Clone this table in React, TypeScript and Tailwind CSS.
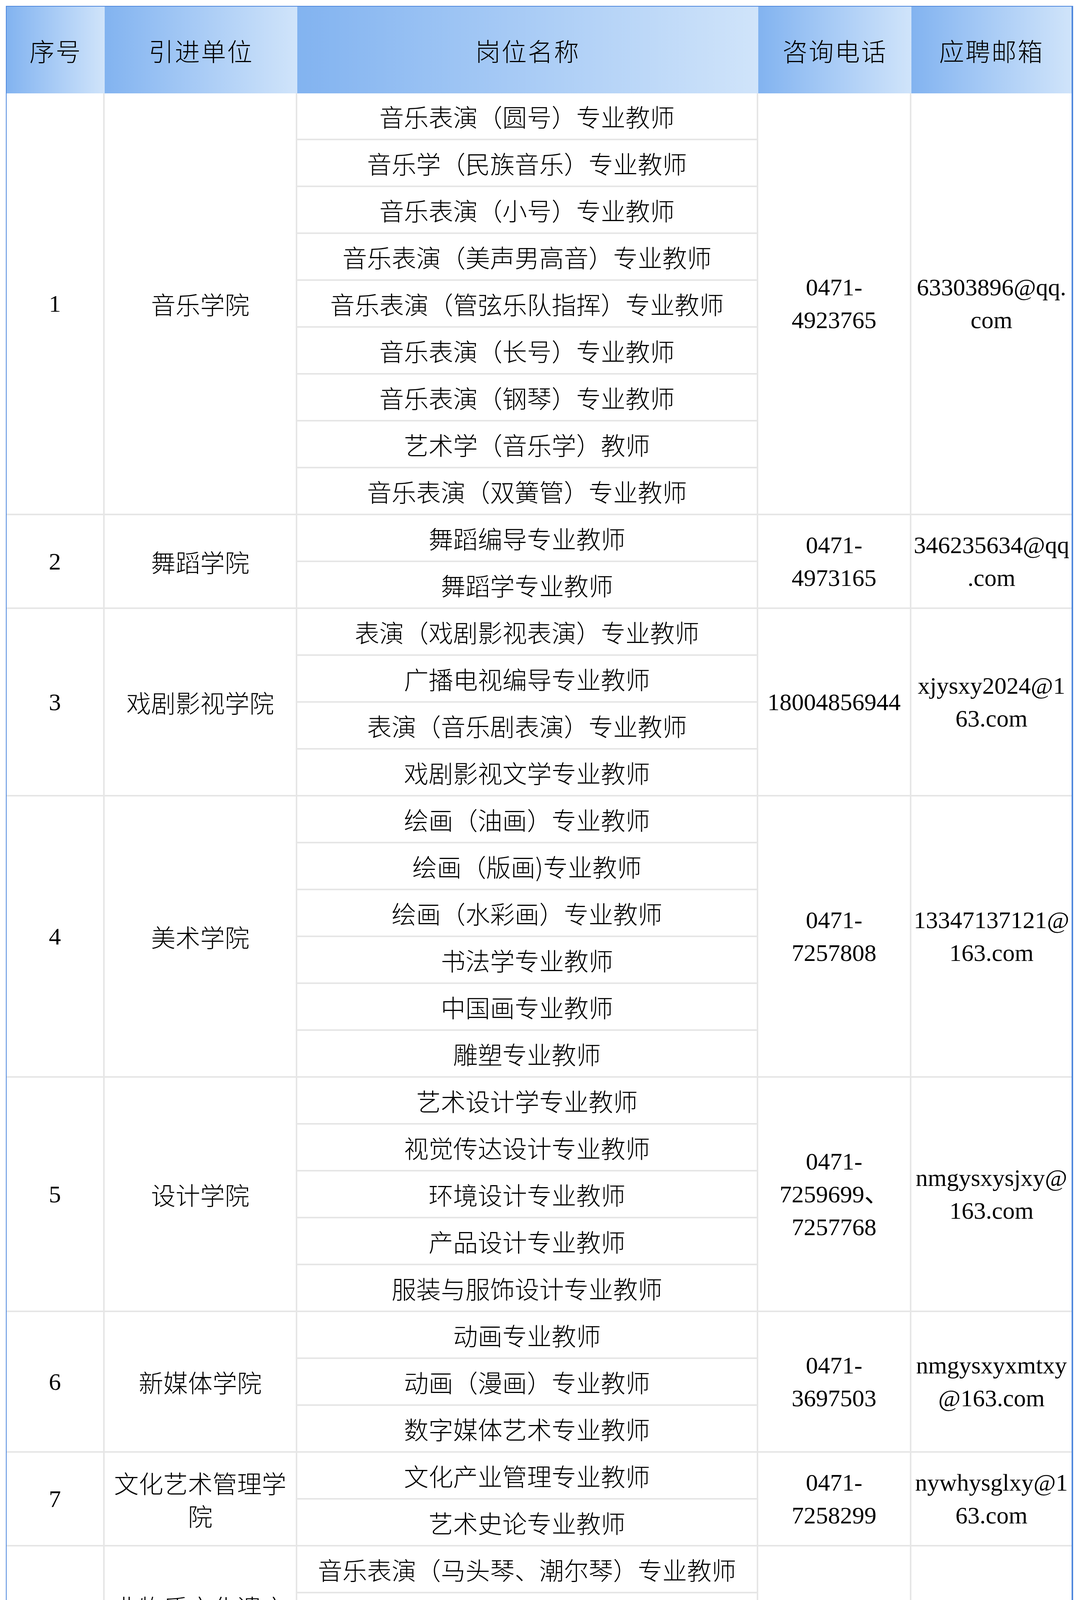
import React from "react";

type Group = {
  no: string;
  unit: string[];
  posts: string[];
  phone: string[];
  email: string[];
  h: string;
};

const groups: Group[] = [
  {
    no: "1",
    unit: ["音乐学院"],
    posts: [
      "音乐表演（圆号）专业教师",
      "音乐学（民族音乐）专业教师",
      "音乐表演（小号）专业教师",
      "音乐表演（美声男高音）专业教师",
      "音乐表演（管弦乐队指挥）专业教师",
      "音乐表演（长号）专业教师",
      "音乐表演（钢琴）专业教师",
      "艺术学（音乐学）教师",
      "音乐表演（双簧管）专业教师",
    ],
    phone: ["0471-", "4923765"],
    email: ["63303896@qq.", "com"],
    h: "h-[1080px] border-b-4",
  },
  {
    no: "2",
    unit: ["舞蹈学院"],
    posts: ["舞蹈编导专业教师", "舞蹈学专业教师"],
    phone: ["0471-", "4973165"],
    email: ["346235634@qq", ".com"],
    h: "h-[240px] border-b-4",
  },
  {
    no: "3",
    unit: ["戏剧影视学院"],
    posts: [
      "表演（戏剧影视表演）专业教师",
      "广播电视编导专业教师",
      "表演（音乐剧表演）专业教师",
      "戏剧影视文学专业教师",
    ],
    phone: ["18004856944"],
    email: ["xjysxy2024@1", "63.com"],
    h: "h-[480px] border-b-4",
  },
  {
    no: "4",
    unit: ["美术学院"],
    posts: [
      "绘画（油画）专业教师",
      "绘画（版画)专业教师",
      "绘画（水彩画）专业教师",
      "书法学专业教师",
      "中国画专业教师",
      "雕塑专业教师",
    ],
    phone: ["0471-", "7257808"],
    email: ["13347137121@", "163.com"],
    h: "h-[720px] border-b-4",
  },
  {
    no: "5",
    unit: ["设计学院"],
    posts: [
      "艺术设计学专业教师",
      "视觉传达设计专业教师",
      "环境设计专业教师",
      "产品设计专业教师",
      "服装与服饰设计专业教师",
    ],
    phone: ["0471-", "7259699、", "7257768"],
    email: ["nmgysxysjxy@", "163.com"],
    h: "h-[600px] border-b-4",
  },
  {
    no: "6",
    unit: ["新媒体学院"],
    posts: ["动画专业教师", "动画（漫画）专业教师", "数字媒体艺术专业教师"],
    phone: ["0471-", "3697503"],
    email: ["nmgysxyxmtxy", "@163.com"],
    h: "h-[360px] border-b-4",
  },
  {
    no: "7",
    unit: ["文化艺术管理学", "院"],
    posts: ["文化产业管理专业教师", "艺术史论专业教师"],
    phone: ["0471-", "7258299"],
    email: ["nywhysglxy@1", "63.com"],
    h: "h-[240px] border-b-4",
  },
  {
    no: "8",
    unit: ["非物质文化遗产", "学院（非物质文", "化遗产研究院）"],
    posts: [
      "音乐表演（马头琴、潮尔琴）专业教师",
      "音乐表演（长调）专业教师",
      "音乐表演（雅托嘎）专业教师",
      "音乐学专业教师",
    ],
    phone: ["0471-", "3955815"],
    email: ["1131490155@q", "q.com"],
    h: "h-[480px] border-b-4",
  },
  {
    no: "9",
    unit: ["马克思主义学院"],
    posts: ["思政课教师"],
    phone: ["0471-", "4979674"],
    email: ["nymksxy@163.", "com"],
    h: "h-[195px] border-b-4",
  },
  {
    no: "10",
    unit: ["通识教育学院"],
    posts: ["中国语言文学教师", "艺术学教师"],
    phone: ["0471-", "4976211"],
    email: ["362201398@qq", ".com"],
    h: "h-[288px] border-b-4",
  },
  {
    no: "11",
    unit: ["艺术与科技学院"],
    posts: ["艺术与科技及相关专业教师"],
    phone: ["15754890482"],
    email: ["547634609@qq", ".com"],
    h: "h-[196px] border-b-4",
  },
  {
    no: "12",
    unit: ["附属中等艺术学", "校"],
    posts: ["低音提琴（兼低音马头琴）教师", "舞蹈基本功教师"],
    phone: ["0471-", "4977143"],
    email: ["nmgysxx@126.", "com"],
    h: "h-[275px]",
  },
];

const cjk = "font-['Noto_Sans_CJK_SC',sans-serif] font-light text-[63px]";
const serif = "font-['Liberation_Serif','Noto_Sans_CJK_SC',serif] text-[62px]";

function Lines({ lines }: { lines: string[] }) {
  return (
    <div className="flex flex-col items-center">
      {lines.map((l, i) => (
        <div key={i} className="whitespace-nowrap">
          {l}
        </div>
      ))}
    </div>
  );
}

const headCell =
  "flex items-center justify-center bg-linear-to-r from-[#82b3f0] to-[#d0e4fa] tracking-[3px]";

export default function App() {
  return (
    <div className="bg-white w-[2762px] h-[5412px] overflow-hidden pt-[15px] pl-[15px] text-black">
      <div className="w-[2732px] border-t-[2px] border-l-[2px] border-r-4 border-b-4 border-[#4f88dd]">
        {/* header */}
        <div className="flex h-[222px] font-['Noto_Sans_CJK_SC',sans-serif] font-light text-[64px]">
          <div className={`${headCell} w-[251px]`}>序号</div>
          <div className={`${headCell} w-[493px]`}>引进单位</div>
          <div className={`${headCell} w-[1180px]`}>岗位名称</div>
          <div className={`${headCell} w-[392px]`}>咨询电话</div>
          <div className={`${headCell} w-[410px]`}>应聘邮箱</div>
        </div>
        {/* body */}
        {groups.map((g) => (
          <div
            key={g.no}
            className={`flex ${g.h} border-[#e6e6e6] leading-[84px]`}
          >
            <div
              className={`w-[251px] flex items-center justify-center border-r-4 border-[#e6e6e6] ${serif}`}
            >
              {g.no}
            </div>
            <div
              className={`w-[493px] flex items-center justify-center border-r-4 border-[#e6e6e6] ${cjk}`}
            >
              <div className="flex flex-col items-center">
                {g.unit.map((u, i) => (
                  <div key={i} className="whitespace-nowrap">
                    {u}
                  </div>
                ))}
              </div>
            </div>
            <div
              className={`w-[1180px] flex flex-col border-r-4 border-[#e6e6e6] ${cjk}`}
            >
              {g.posts.map((p, i) => (
                <div
                  key={i}
                  className={`flex-1 flex items-center justify-center whitespace-nowrap ${
                    i < g.posts.length - 1 ? "border-b-4 border-[#e6e6e6]" : ""
                  }`}
                >
                  {p}
                </div>
              ))}
            </div>
            <div
              className={`w-[392px] flex items-center justify-center border-r-4 border-[#e6e6e6] ${serif}`}
            >
              <Lines lines={g.phone} />
            </div>
            <div
              className={`w-[410px] flex items-center justify-center ${serif}`}
            >
              <Lines lines={g.email} />
            </div>
          </div>
        ))}
      </div>
    </div>
  );
}
